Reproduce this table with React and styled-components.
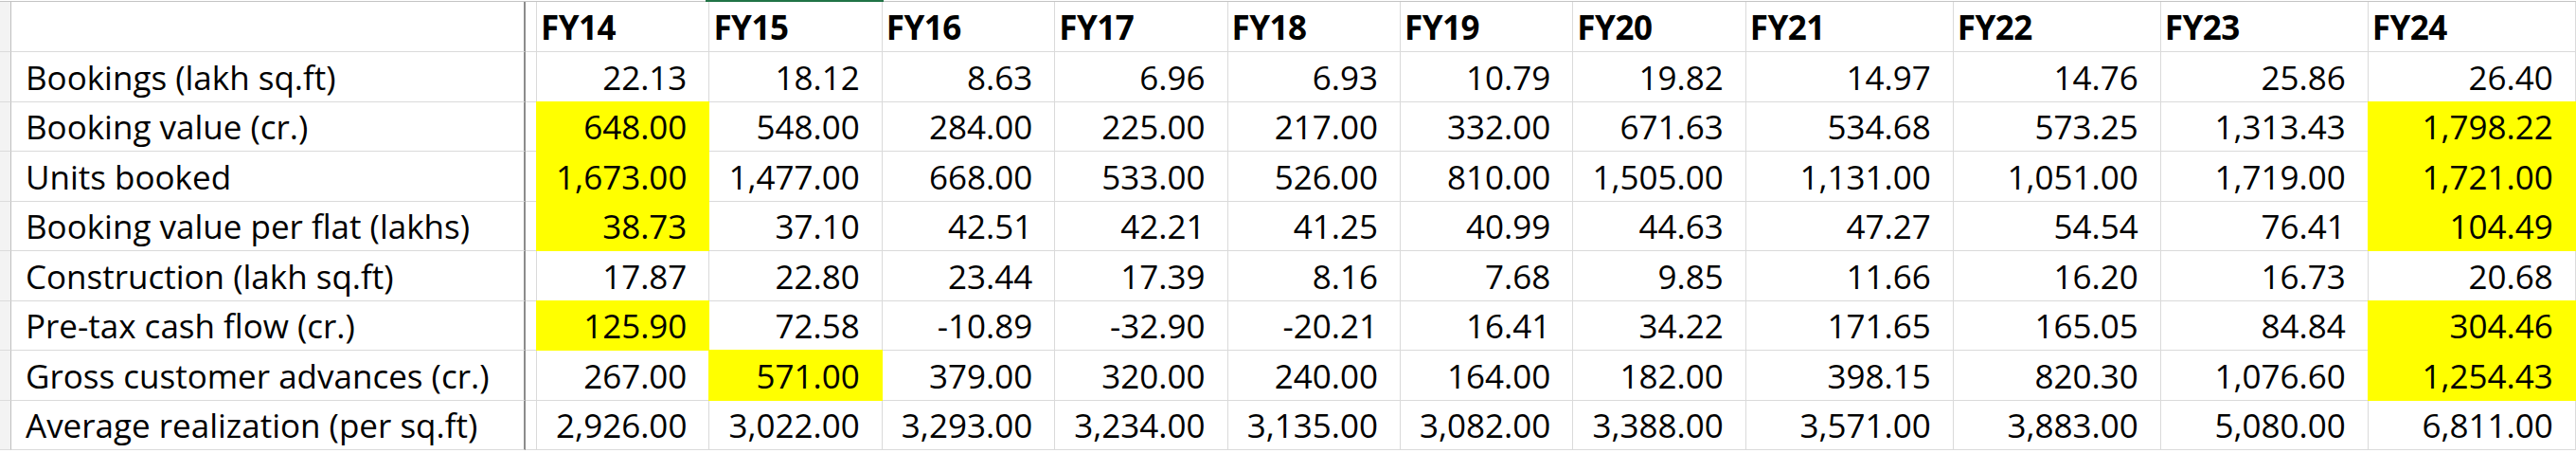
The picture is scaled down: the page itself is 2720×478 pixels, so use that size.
import React from "react";
import styled, { createGlobalStyle, css } from "styled-components";

const Global = createGlobalStyle`
  html, body { margin: 0; padding: 0; background: #ffffff; }
  body { font-family: "Open Sans", Lato, "Liberation Sans", sans-serif; color: #000; }
  #root { width: 2720px; height: 478px; overflow: hidden; }
`;

const YELLOW = "#ffff00";
const GRID = "#dadada";

const Sheet = styled.div`
  display: flex;
  flex-direction: column;
  padding-top: 1px;
  width: 2720px;
`;

const Row = styled.div`
  display: grid;
  grid-template-columns: 12px 543px 12px repeat(7, 182.4px) repeat(4, 219px);
  height: ${(p) => p.$h}px;
  box-sizing: border-box;
  ${(p) => p.$top && css`border-top: 1px solid #c4c4c4;`}
`;

const Strip = styled.div`
  box-sizing: border-box;
  background: #f3f3f3;
  border-right: 1px solid #bfbfbf;
  border-bottom: 1px solid #dcdcdc;
`;

const Cell = styled.div`
  position: relative;
  box-sizing: border-box;
  display: flex;
  align-items: flex-end;
  border-right: 1px solid ${GRID};
  border-bottom: 1px solid ${GRID};
  font-size: 35px;
  line-height: 1.2;
  padding-bottom: 4px;
  white-space: nowrap;
  overflow: visible;
`;

const Label = styled(Cell)`
  padding-left: 15px;
  border-right: 2px solid #8c8c8c;
`;

const Spacer = styled(Cell)``;

const Head = styled(Cell)`
  font-weight: 700;
  padding-left: 4px;
  letter-spacing: -0.5px;
  ${(p) =>
    p.$selected &&
    css`
      &::before {
        content: "";
        position: absolute;
        top: -2px;
        left: -4px;
        right: -2px;
        height: 2px;
        background: #217346;
      }
    `}
`;

const Num = styled(Cell)`
  justify-content: flex-end;
  padding-right: 23px;
  ${(p) =>
    p.$hl &&
    css`
      background: ${YELLOW};
      border-right-color: ${YELLOW};
      border-bottom-color: ${YELLOW};
      box-shadow: -1px 0 0 ${YELLOW}, 0 -1px 0 ${YELLOW}, -1px -1px 0 ${YELLOW};
    `}
`;

const years = ["FY14", "FY15", "FY16", "FY17", "FY18", "FY19", "FY20", "FY21", "FY22", "FY23", "FY24"];

const rows = [
  {
    label: "Bookings (lakh sq.ft)",
    values: ["22.13", "18.12", "8.63", "6.96", "6.93", "10.79", "19.82", "14.97", "14.76", "25.86", "26.40"],
    hl: [],
  },
  {
    label: "Booking value (cr.)",
    values: ["648.00", "548.00", "284.00", "225.00", "217.00", "332.00", "671.63", "534.68", "573.25", "1,313.43", "1,798.22"],
    hl: [0, 10],
  },
  {
    label: "Units booked",
    values: ["1,673.00", "1,477.00", "668.00", "533.00", "526.00", "810.00", "1,505.00", "1,131.00", "1,051.00", "1,719.00", "1,721.00"],
    hl: [0, 10],
  },
  {
    label: "Booking value per flat (lakhs)",
    values: ["38.73", "37.10", "42.51", "42.21", "41.25", "40.99", "44.63", "47.27", "54.54", "76.41", "104.49"],
    hl: [0, 10],
  },
  {
    label: "Construction (lakh sq.ft)",
    values: ["17.87", "22.80", "23.44", "17.39", "8.16", "7.68", "9.85", "11.66", "16.20", "16.73", "20.68"],
    hl: [],
  },
  {
    label: "Pre-tax cash flow (cr.)",
    values: ["125.90", "72.58", "-10.89", "-32.90", "-20.21", "16.41", "34.22", "171.65", "165.05", "84.84", "304.46"],
    hl: [0, 10],
  },
  {
    label: "Gross customer advances (cr.)",
    values: ["267.00", "571.00", "379.00", "320.00", "240.00", "164.00", "182.00", "398.15", "820.30", "1,076.60", "1,254.43"],
    hl: [1, 10],
  },
  {
    label: "Average realization (per sq.ft)",
    values: ["2,926.00", "3,022.00", "3,293.00", "3,234.00", "3,135.00", "3,082.00", "3,388.00", "3,571.00", "3,883.00", "5,080.00", "6,811.00"],
    hl: [],
  },
];

export default function App() {
  return (
    <>
      <Global />
      <Sheet>
        <Row $h={54} $top>
          <Strip />
          <Label />
          <Spacer />
          {years.map((y) => (
            <Head key={y} $selected={y === "FY15"}>
              {y}
            </Head>
          ))}
        </Row>
        {rows.map((r) => (
          <Row key={r.label} $h={52.5}>
            <Strip />
            <Label>{r.label}</Label>
            <Spacer />
            {r.values.map((v, i) => (
              <Num key={i} $hl={r.hl.includes(i)}>
                {v}
              </Num>
            ))}
          </Row>
        ))}
      </Sheet>
    </>
  );
}
